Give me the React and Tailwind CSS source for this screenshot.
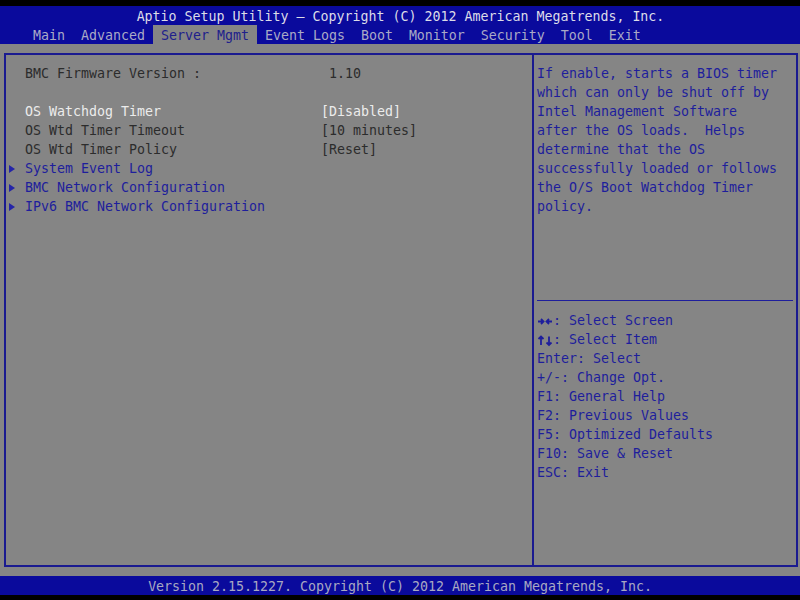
const tabs = ["Main", "Advanced", "Server Mgmt", "Event Logs", "Boot", "Monitor", "Security", "Tool", "Exit"];

const rows = [
    { label: "BMC Firmware Version :", value: " 1.10", tone: "dark" },
    { blank: true },
    { label: "OS Watchdog Timer", value: "[Disabled]", tone: "selected" },
    { label: "OS Wtd Timer Timeout", value: "[10 minutes]", tone: "dark" },
    { label: "OS Wtd Timer Policy", value: "[Reset]", tone: "dark" },
    { label: "System Event Log", submenu: true },
    { label: "BMC Network Configuration", submenu: true },
    { label: "IPv6 BMC Network Configuration", submenu: true },
];

const helpText = [
    "If enable, starts a BIOS timer",
    "which can only be shut off by",
    "Intel Management Software",
    "after the OS loads.  Helps",
    "determine that the OS",
    "successfully loaded or follows",
    "the O/S Boot Watchdog Timer",
    "policy.",
];

const keys = [
    ["lr", ": Select Screen"],
    ["ud", ": Select Item"],
    ["", "Enter: Select"],
    ["", "+/-: Change Opt."],
    ["", "F1: General Help"],
    ["", "F2: Previous Values"],
    ["", "F5: Optimized Defaults"],
    ["", "F10: Save & Reset"],
    ["", "ESC: Exit"],
];

// the bold arrow pairs at the start of the key legend
function Arrows({ kind }) {
    if (kind === "lr") {
        return (
            <svg width="16" height="19" viewBox="0 0 16 19" className="inline-block align-top">
                <g fill="none" stroke="currentColor" strokeWidth="1.8">
                    <path d="M1 10.5h5.5M4 8l2.5 2.5L4 13" />
                    <path d="M15 10.5H9.5M12 8l-2.5 2.5L12 13" />
                </g>
            </svg>
        );
    }
    return (
        <svg width="16" height="19" viewBox="0 0 16 19" className="inline-block align-top">
            <g fill="none" stroke="currentColor" strokeWidth="1.8">
                <path d="M4 15V6.5M1.5 9L4 6.5 6.5 9" />
                <path d="M12 6.5V15M9.5 12.5L12 15l2.5-2.5" />
            </g>
        </svg>
    );
}

function SetupRow({ row }) {
    if (row.blank) {
        return <div className="h-[19px]"></div>;
    }

    const color = row.submenu
        ? "text-[#1e1e9c]"
        : row.tone === "selected"
        ? "text-[#ececec]"
        : "text-[#2c2c2c]";

    return (
        <div className={`flex h-[19px] items-center ${color}`}>
            <div className="flex w-[16px] items-center pt-[1px]">
                {row.submenu && (
                    <div className="h-0 w-0 border-y-[4px] border-l-[6px] border-y-transparent border-l-[#2424a8]"></div>
                )}
            </div>
            <div className="w-[296px] whitespace-pre">{row.label}</div>
            {row.value && <div className="whitespace-pre">{row.value}</div>}
        </div>
    );
}

export default function App() {
    return (
        <div
            className="flex h-[600px] w-[800px] flex-col overflow-hidden bg-black text-[13.29px] leading-[19px]"
            style={{ fontFamily: '"DejaVu Sans Mono", "Liberation Mono", monospace' }}
        >
            <div className="h-[6px] shrink-0"></div>

            {/* Header */}
            <div className="shrink-0 bg-[#0a0a9c]">
                <div className="h-[19px] pt-[2px] pl-[1px] text-center leading-[17px] whitespace-pre text-[#dcdce8]">
                    Aptio Setup Utility – Copyright (C) 2012 American Megatrends, Inc.
                </div>
                <div className="flex h-[19px] pl-[25px]">
                    {tabs.map((tab) => (
                        <div
                            key={tab}
                            className={`h-[19px] px-[8px] pt-[2px] leading-[17px] whitespace-pre ${
                                tab === "Server Mgmt"
                                    ? "bg-[#858585] text-[#20208c]"
                                    : "text-[#a9a9c6]"
                            }`}
                        >
                            {tab}
                        </div>
                    ))}
                </div>
            </div>

            {/* Main area */}
            <div className="flex h-[532px] shrink-0 flex-col bg-[#858585] pt-[9px] pb-[9px] pl-[4px] pr-[2px]">
                <div className="flex flex-1 border-2 border-[#1a1a90]">
                    {/* Left panel */}
                    <div className="w-[526px] shrink-0 pl-[3px] pt-[9px]">
                        {rows.map((row, i) => (
                            <SetupRow key={i} row={row} />
                        ))}
                    </div>

                    <div className="w-[2px] shrink-0 bg-[#1a1a90]"></div>

                    {/* Right panel */}
                    <div className="flex flex-1 flex-col pt-[9px] text-[#1e1e9c]">
                        <div className="pl-[3px]">
                            {helpText.map((line) => (
                                <div key={line} className="h-[19px] whitespace-pre">
                                    {line}
                                </div>
                            ))}
                        </div>
                        <div className="mx-[3px] mt-[84px] h-px bg-[#1e1e9c]"></div>
                        <div className="mt-[10px] pl-[3px]">
                            {keys.map(([arrows, text]) => (
                                <div key={text} className="h-[19px] whitespace-pre">
                                    {arrows && <Arrows kind={arrows} />}
                                    {text}
                                </div>
                            ))}
                        </div>
                    </div>
                </div>
            </div>

            {/* Footer */}
            <div className="h-[19px] shrink-0 bg-[#0a0a9c] pt-[2px] text-center leading-[17px] whitespace-pre text-[#a8a8c2]">
                Version 2.15.1227. Copyright (C) 2012 American Megatrends, Inc.
            </div>
        </div>
    );
}
